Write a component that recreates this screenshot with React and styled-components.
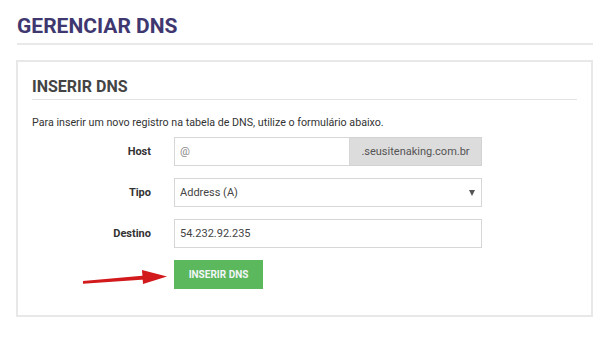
import React from "react";
import styled, { createGlobalStyle } from "styled-components";

const Global = createGlobalStyle`
  html, body { margin: 0; padding: 0; background: #fff; }
  body { font-family: Roboto, "Liberation Sans", sans-serif; color: #333; }
`;

const Page = styled.div`
  padding: 10px 18px 0 17px;
`;

const Title = styled.h1`
  margin: 0;
  font-size: 21px;
  font-weight: 700;
  color: #3f3870;
  line-height: 32px;
  padding-bottom: 1px;
  border-bottom: 2px solid #e9e9e9;
`;

const Panel = styled.section`
  margin-top: 15px;
  margin-left: -1px;
  width: 545px;
  border: 2px solid #e8e8e8;
  padding: 14px 14px 26px 14px;
`;

const PanelTitle = styled.h2`
  margin: 0;
  font-size: 16px;
  font-weight: 700;
  color: #444;
  line-height: 22px;
  padding-bottom: 1px;
  border-bottom: 1px solid #e3e3e3;
`;

const Intro = styled.p`
  margin: 16px 0 7px;
  font-size: 10.7px;
  line-height: 14px;
  color: #333;
`;

const Form = styled.form`
  display: grid;
  grid-template-columns: 119px 308px;
  column-gap: 23px;
  row-gap: 12px;
  align-items: center;
`;

const Label = styled.label`
  text-align: right;
  font-size: 11px;
  font-weight: 700;
  color: #333;
`;

const InputGroup = styled.div`
  display: flex;
  height: 29px;
`;

const Field = styled.div`
  flex: 1;
  height: 29px;
  box-sizing: border-box;
  border: 1px solid #d6d6d6;
  background: #fff;
  display: flex;
  align-items: center;
  justify-content: space-between;
  padding: 0 6px 0 5px;
  font-size: 11px;
  color: ${(p) => (p.$placeholder ? "#8a8a8a" : "#444")};
`;

const Addon = styled.div`
  width: 132px;
  box-sizing: border-box;
  background: #dcdcdc;
  border: 1px solid #d2d2d2;
  border-left: none;
  display: flex;
  align-items: center;
  justify-content: center;
  font-size: 11px;
  color: #555;
`;

const Caret = styled.span`
  width: 0;
  height: 0;
  border-left: 3px solid transparent;
  border-right: 3px solid transparent;
  border-top: 6px solid #555;
  margin-top: 1px;
`;

const Submit = styled.button`
  width: 89px;
  height: 29px;
  border: none;
  background: #5cb85c;
  color: #f2f5f9;
  font-family: Roboto, "Liberation Sans", sans-serif;
  font-size: 10px;
  font-weight: 700;
  padding: 0;
`;

const SubmitCell = styled.div`
  grid-column: 2;
  position: relative;
  height: 29px;
`;

const Arrow = styled.svg`
  position: absolute;
  left: -95px;
  top: 0;
`;

export default function App() {
  return (
    <>
      <Global />
      <Page>
        <Title>GERENCIAR DNS</Title>
        <Panel>
          <PanelTitle>INSERIR DNS</PanelTitle>
          <Intro>Para inserir um novo registro na tabela de DNS, utilize o formulário abaixo.</Intro>
          <Form>
            <Label>Host</Label>
            <InputGroup>
              <Field $placeholder>@</Field>
              <Addon>.seusitenaking.com.br</Addon>
            </InputGroup>
            <Label>Tipo</Label>
            <Field>
              Address (A)
              <Caret />
            </Field>
            <Label>Destino</Label>
            <Field>54.232.92.235</Field>
            <SubmitCell>
              <Arrow width="92" height="30" viewBox="0 0 92 30">
                <polygon points="4,21 66,15.5 66,19.5 4,23.8" fill="#d2191b" />
                <polygon points="63,10 88,16.5 64,24" fill="#d2191b" />
              </Arrow>
              <Submit type="button">INSERIR DNS</Submit>
            </SubmitCell>
          </Form>
        </Panel>
      </Page>
    </>
  );
}
